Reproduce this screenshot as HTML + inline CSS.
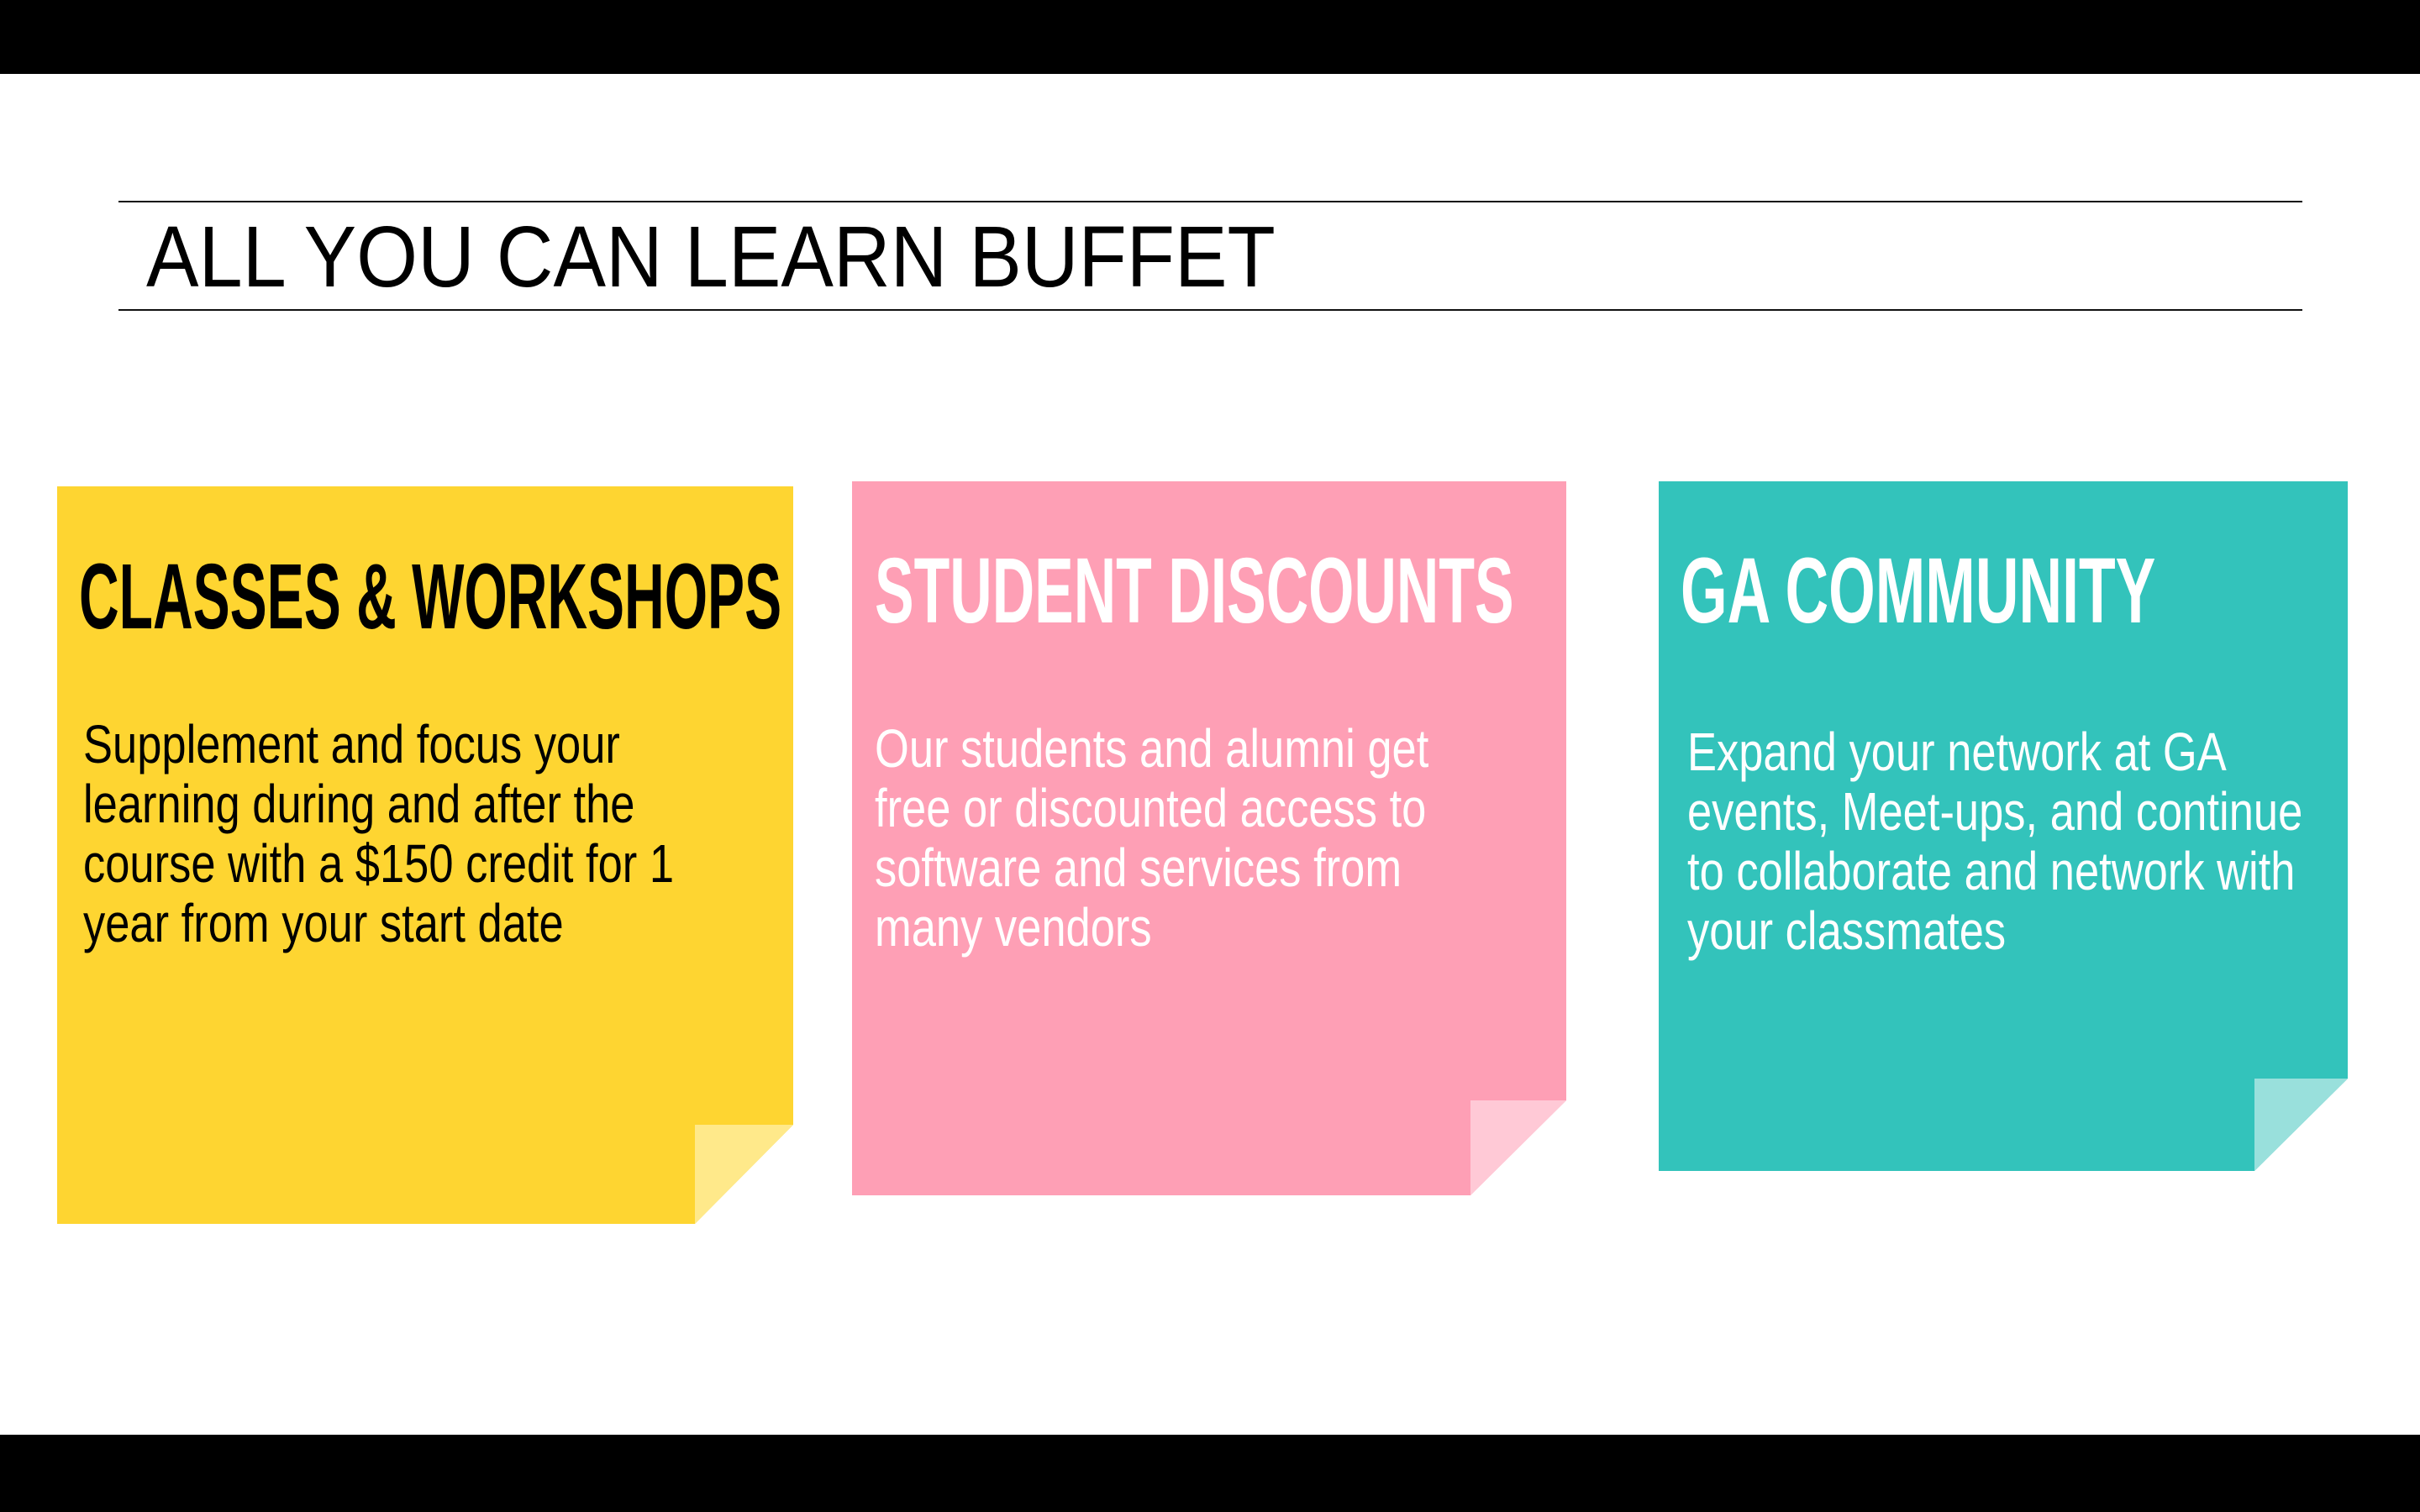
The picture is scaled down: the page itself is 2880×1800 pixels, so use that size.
<!DOCTYPE html>
<html><head><meta charset="utf-8"><style>
html,body{margin:0;padding:0}
body{width:2880px;height:1800px;position:relative;background:#fff;overflow:hidden;font-family:"Liberation Sans",sans-serif}
.bar{position:absolute;left:0;width:2880px;background:#000}
.line{position:absolute;left:141px;width:2599px;height:2px;background:#111}
.t{position:absolute;white-space:nowrap;transform-origin:0 0}
.h{font-family:"Liberation Sans",sans-serif;font-weight:bold;font-size:110px;line-height:110px;transform:scaleX(0.6)}
.b{font-family:"Liberation Sans",sans-serif;font-size:64px;line-height:71px;transform:scaleX(0.82)}
</style></head><body>
<div class="bar" style="top:0;height:88px"></div>
<div class="bar" style="top:1708px;height:92px"></div>
<div class="line" style="top:239px"></div>
<div class="line" style="top:368px"></div>
<div class="t" style="left:174px;top:254px;font-size:103px;line-height:103px;color:#000;transform:scaleX(0.91)">ALL YOU CAN LEARN BUFFET</div>

<svg width="2880" height="1800" style="position:absolute;left:0;top:0">
<polygon points="68,579 944,579 944,1339 827,1457 68,1457" fill="#FED531"/>
<polygon points="827,1339 944,1339 827,1457" fill="#FFE98A"/>
<polygon points="1014,573 1864,573 1864,1310 1750,1423 1014,1423" fill="#FE9FB5"/>
<polygon points="1750,1310 1864,1310 1750,1423" fill="#FFC9D6"/>
<polygon points="1974,573 2794,573 2794,1284 2683,1394 1974,1394" fill="#33C3BB"/>
<polygon points="2683,1284 2794,1284 2683,1394" fill="#99E0DC"/>
</svg>

<div class="t h" style="left:94px;top:656px;color:#000">CLASSES &amp; WORKSHOPS</div>
<div class="t h" style="left:1041px;top:649px;color:#fff;transform:scaleX(0.635)">STUDENT DISCOUNTS</div>
<div class="t h" style="left:2000px;top:649px;color:#fff;transform:scaleX(0.65)">GA COMMUNITY</div>

<div class="t b" style="left:99px;top:851px;color:#000">Supplement and focus your<br>learning during and after the<br>course with a $150 credit for 1<br>year from your start date</div>
<div class="t b" style="left:1041px;top:856px;color:#fff">Our students and alumni get<br>free or discounted access to<br>software and services from<br>many vendors</div>
<div class="t b" style="left:2008px;top:860px;color:#fff">Expand your network at GA<br>events, Meet-ups, and continue<br>to collaborate and network with<br>your classmates</div>
</body></html>
